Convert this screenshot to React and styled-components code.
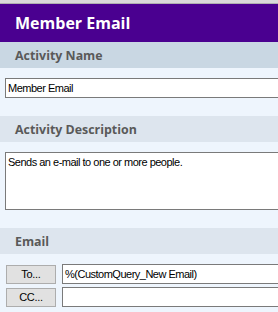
import React from 'react';
import styled, { createGlobalStyle } from 'styled-components';

const GlobalStyle = createGlobalStyle`
    html, body {
        margin: 0;
        padding: 0;
        background: #eef5fd;
        overflow: hidden;
    }
`;

const Panel = styled.div`
    display: flex;
    flex-direction: column;
    width: 278px;
    height: 312px;
    overflow: hidden;
    background: #eef5fd;
    font-family: 'Liberation Sans', Arial, sans-serif;
`;

const TopStrip = styled.div`
    height: 3px;
    background: #dadada;
    border-bottom: 1px solid #b0b0b0;
`;

const Header = styled.div`
    display: flex;
    align-items: center;
    height: 38px;
    padding-left: 15px;
    background: #4a0090;
    color: #ffffff;
    font-family: 'Open Sans', 'Noto Sans', sans-serif;
    font-weight: 700;
    font-size: 16px;
`;

const SectionBar = styled.div`
    display: flex;
    align-items: center;
    height: 26px;
    margin-top: ${p => p.$top}px;
    padding-left: 15px;
    background: ${p => (p.$active ? '#c9d7e3' : '#dde5ee')};
    color: #595959;
    font-family: 'Open Sans', 'Noto Sans', sans-serif;
    font-weight: 700;
    font-size: 12.4px;
`;

const Field = styled.div`
    box-sizing: border-box;
    height: ${p => p.$height || 20}px;
    margin: 10px -30px 0 5px;
    padding: ${p => (p.$multi ? '3px 2px' : '0 2px')};
    display: flex;
    align-items: ${p => (p.$multi ? 'flex-start' : 'center')};
    background: #ffffff;
    border: 1px solid #7a7a7a;
    color: #000000;
    font-size: 11px;
    letter-spacing: -0.5px;
`;

const Rows = styled.div`
    display: flex;
    flex-direction: column;
    gap: 3px;
    margin-top: 10px;
`;

const Row = styled.div`
    display: flex;
    align-items: center;
    gap: 6px;
    height: 20px;
    padding-left: 6px;
`;

const AddressButton = styled.div`
    box-sizing: border-box;
    width: 50px;
    height: 19px;
    display: flex;
    align-items: center;
    justify-content: center;
    background: #e1e1e1;
    border: 1px solid #adadad;
    color: #000000;
    font-size: 11px;
    letter-spacing: -0.3px;
`;

const AddressInput = styled.div`
    box-sizing: border-box;
    flex: 1;
    height: 20px;
    margin-right: -30px;
    display: flex;
    align-items: center;
    padding: 0 2px;
    background: #ffffff;
    border: 1px solid #7a7a7a;
    font-size: 11px;
    letter-spacing: -0.5px;
`;

const App = () => (
    <>
        <GlobalStyle />
        <Panel>
            <TopStrip />
            <Header>Member Email</Header>
            <SectionBar $active $top={0}>Activity Name</SectionBar>
            <Field>Member Email</Field>
            <SectionBar $top={18}>Activity Description</SectionBar>
            <Field $multi $height={58}>Sends an e-mail to one or more people.</Field>
            <SectionBar $top={18}>Email</SectionBar>
            <Rows>
                <Row>
                    <AddressButton>To...</AddressButton>
                    <AddressInput>%(CustomQuery_New Email)</AddressInput>
                </Row>
                <Row>
                    <AddressButton>CC...</AddressButton>
                    <AddressInput />
                </Row>
            </Rows>
        </Panel>
    </>
);

export default App;
